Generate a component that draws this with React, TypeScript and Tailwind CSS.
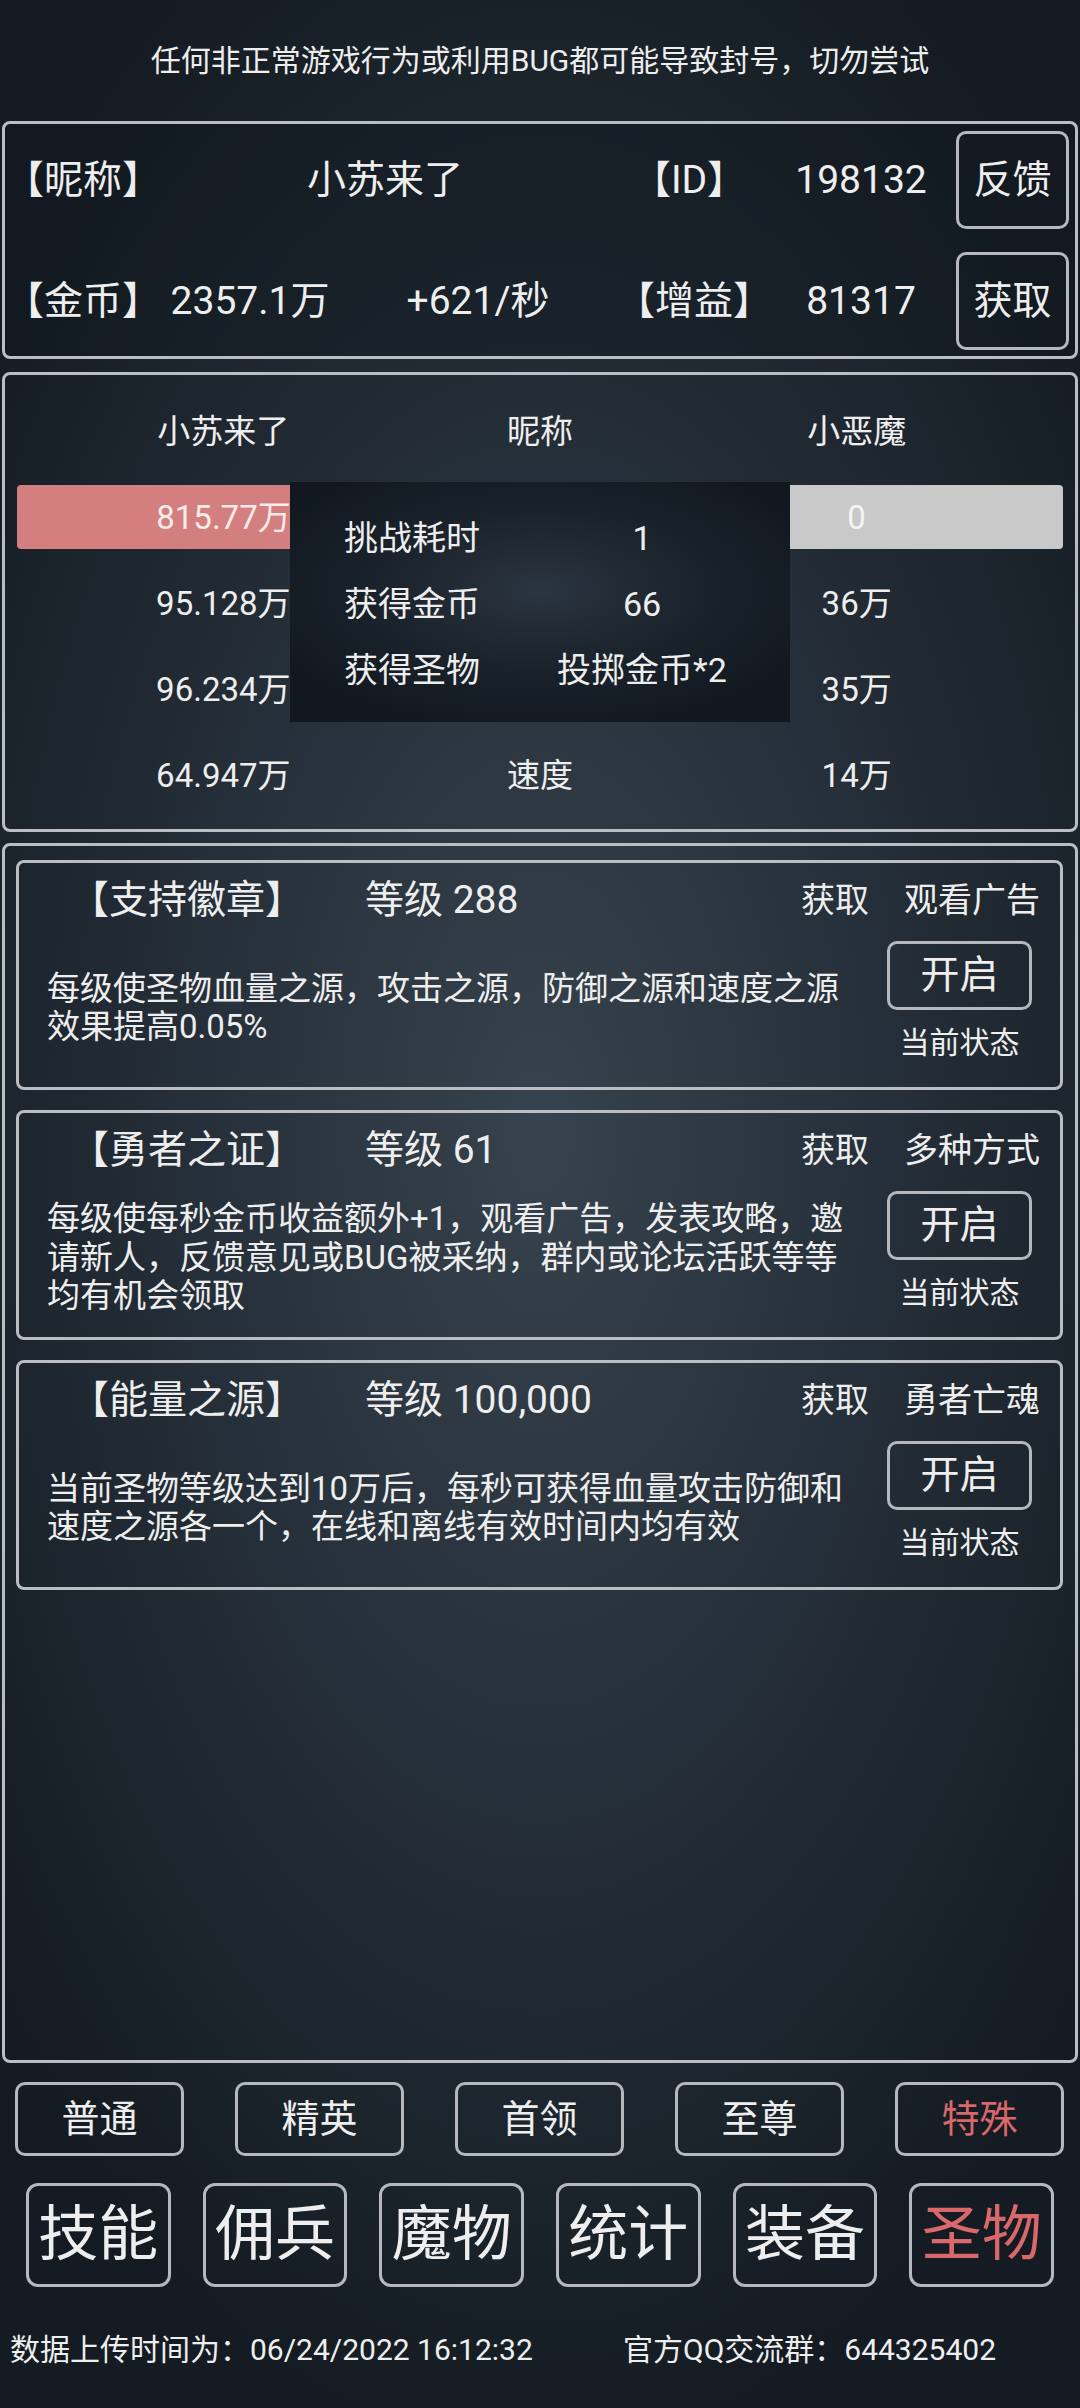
import React from "react";

const font = "font-['Roboto','Noto_Sans_CJK_SC',sans-serif]";

const TopPanel = () => (
  <div className="mx-[2px] h-[238px] rounded-[8px] border-[3px] border-[#babec2] bg-[#0f161d]/40 px-0 pt-[7px]">
    <div className="flex h-[98px] items-center text-[39px] leading-none">
      <div className="w-[155px]">【昵称】</div>
      <div className="w-[450px] text-center">小苏来了</div>
      <div className="w-[158px] text-center">【ID】</div>
      <div className="w-[186px] text-center">198132</div>
      <button className="ml-[2px] flex h-[98px] w-[113px] items-center justify-center rounded-[10px] border-[3px] border-[#b5b9bd]">
        反馈
      </button>
    </div>
    <div className="mt-[23px] flex h-[98px] items-center text-[39px] leading-none">
      <div className="w-[155px]">【金币】</div>
      <div className="w-[180px] text-center">2357.1万</div>
      <div className="w-[276px] text-center">+621/秒</div>
      <div className="w-[152px] text-center">【增益】</div>
      <div className="w-[186px] text-center">81317</div>
      <button className="ml-[2px] flex h-[98px] w-[113px] items-center justify-center rounded-[10px] border-[3px] border-[#b5b9bd]">
        获取
      </button>
    </div>
  </div>
);

// middle labels of these rows sit under the result popup, so they are left empty
const statRows = [
  { left: "95.128万", mid: "", right: "36万" },
  { left: "96.234万", mid: "", right: "35万" },
  { left: "64.947万", mid: "速度", right: "14万" },
];

const BattlePanel = () => (
  <div className="relative mx-[2px] mt-[13px] h-[460px] rounded-[8px] border-[3px] border-[#babec2] pt-[13px] text-[33px] leading-none">
    <div className="grid h-[86px] grid-cols-3 items-center px-[60px] text-center">
      <div>小苏来了</div>
      <div>昵称</div>
      <div>小恶魔</div>
    </div>
    <div className="flex h-[86px] items-center px-[12px]">
      <div className="flex h-[64px] w-[523px] items-center rounded-l-[4px] bg-[#d47f7f]">
        <div className="ml-[48px] w-[317px] text-center text-[#fbeaea]">815.77万</div>
      </div>
      <div className="flex h-[64px] w-[523px] items-center rounded-r-[4px] bg-[#c9c9c9]">
        <div className="ml-[158px] w-[317px] text-center text-[#f4f4f4]">0</div>
      </div>
    </div>
    {statRows.map((r) => (
      <div key={r.left} className="grid h-[86px] grid-cols-3 items-center px-[60px] text-center">
        <div>{r.left}</div>
        <div>{r.mid}</div>
        <div>{r.right}</div>
      </div>
    ))}

    <div className="absolute left-[285px] top-[107px] h-[240px] w-[500px] bg-[radial-gradient(ellipse_60%_60%_at_50%_45%,#2b353f_0%,#1a222b_55%,#111820_100%)] pt-[23px] text-[34px]">
      {[
        ["挑战耗时", "1"],
        ["获得金币", "66"],
        ["获得圣物", "投掷金币*2"],
      ].map(([k, v]) => (
        <div key={k} className="flex h-[66px] items-center pl-[54px]">
          <div className="w-[150px]">{k}</div>
          <div className="w-[296px] text-center">{v}</div>
        </div>
      ))}
    </div>
  </div>
);

type Relic = { name: string; level: string; via: string; desc: string };

const relics: Relic[] = [
  {
    name: "【支持徽章】",
    level: "等级 288",
    via: "观看广告",
    desc: "每级使圣物血量之源，攻击之源，防御之源和速度之源效果提高0.05%",
  },
  {
    name: "【勇者之证】",
    level: "等级 61",
    via: "多种方式",
    desc: "每级使每秒金币收益额外+1，观看广告，发表攻略，邀请新人，反馈意见或BUG被采纳，群内或论坛活跃等等均有机会领取",
  },
  {
    name: "【能量之源】",
    level: "等级 100,000",
    via: "勇者亡魂",
    desc: "当前圣物等级达到10万后，每秒可获得血量攻击防御和速度之源各一个，在线和离线有效时间内均有效",
  },
];

const RelicCard = ({ relic }: { relic: Relic }) => (
  <div className="h-[230px] rounded-[8px] border-[3px] border-[#babec2]">
    <div className="flex h-[74px] items-center leading-none">
      <div className="ml-[51px] w-[234px] text-[39px]">{relic.name}</div>
      <div className="ml-[61px] text-[39px]">{relic.level}</div>
      <div className="ml-auto flex items-center gap-[35px] pr-[20px] text-[34px]">
        <span>获取</span>
        <span>{relic.via}</span>
      </div>
    </div>
    <div className="flex h-[150px] items-start">
      <p className="mb-[8px] ml-[28px] w-[802px] self-center text-[33px] leading-[38.5px]">{relic.desc}</p>
      <div className="ml-[38px] mt-[4px] flex w-[145px] flex-col items-center">
        <button className="flex h-[69px] w-[145px] items-center justify-center rounded-[10px] border-[3px] border-[#b5b9bd] text-[39px] leading-none">
          开启
        </button>
        <div className="mt-[16px] text-[30px] leading-[34px]">当前状态</div>
      </div>
    </div>
  </div>
);

const tabs = ["普通", "精英", "首领", "至尊", "特殊"];
const navs = ["技能", "佣兵", "魔物", "统计", "装备", "圣物"];

export default function App() {
  return (
    <div
      className={`${font} h-[2408px] w-[1080px] overflow-hidden bg-[radial-gradient(ellipse_65%_55%_at_50%_47%,#36424d_0%,#27313b_45%,#141b22_100%)] text-[#eeeeee]`}
    >
      <div className="flex h-[121px] items-center justify-center text-[30px] leading-none">
        任何非正常游戏行为或利用BUG都可能导致封号，切勿尝试
      </div>

      <TopPanel />
      <BattlePanel />

      <div className="mx-[2px] mt-[11px] flex h-[1220px] flex-col gap-[20px] rounded-[8px] border-[3px] border-[#babec2] pl-[11px] pr-[12px] pt-[14px]">
        {relics.map((r) => (
          <RelicCard key={r.name} relic={r} />
        ))}
      </div>

      <div className="mt-[19px] flex gap-[51px] px-[15px]">
        {tabs.map((t, i) => (
          <button
            key={t}
            className={`flex h-[74px] w-[169px] items-center justify-center rounded-[10px] border-[3px] border-[#b5b9bd] text-[38px] leading-none ${
              i === 4 ? "text-[#d9686b]" : ""
            }`}
          >
            {t}
          </button>
        ))}
      </div>

      <div className="mt-[27px] flex gap-[32px] px-[26px]">
        {navs.map((t, i) => (
          <button
            key={t}
            className={`flex h-[104px] w-[145px] items-center justify-center rounded-[12px] border-[3px] border-[#b5b9bd] text-[60px] leading-none ${
              i === 5 ? "text-[#d9686b]" : ""
            }`}
          >
            {t}
          </button>
        ))}
      </div>

      <div className="mt-[48px] flex h-[30px] items-center text-[30px] leading-none">
        <span className="ml-[10px] w-[613px]">数据上传时间为：06/24/2022 16:12:32</span>
        <span>官方QQ交流群：644325402</span>
      </div>
    </div>
  );
}
